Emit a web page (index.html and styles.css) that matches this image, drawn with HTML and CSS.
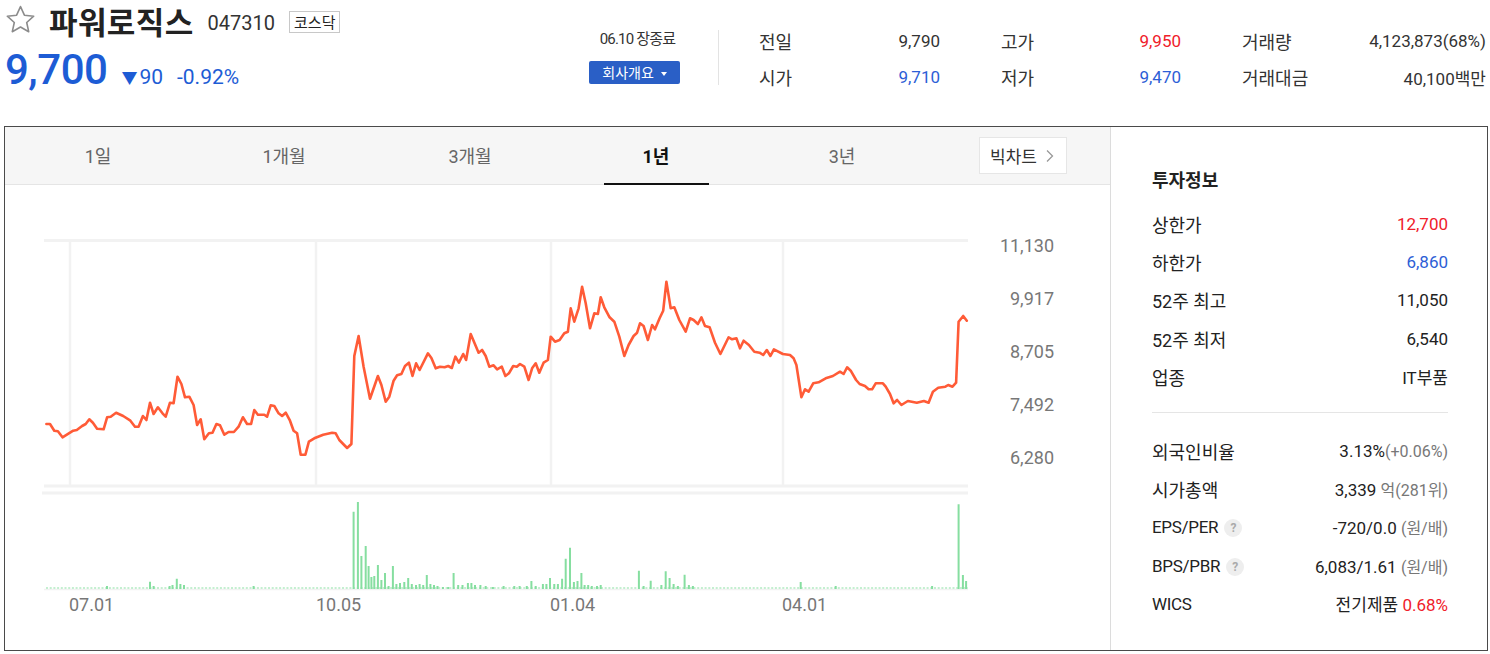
FILE: index.html
```html
<!DOCTYPE html>
<html lang="ko">
<head>
<meta charset="utf-8">
<title>파워로직스</title>
<link rel="stylesheet" href="styles.css">
</head>
<body>
<div class="header">
  <div class="summary">
    <div class="title-row">
      <svg class="star" width="31" height="29" viewBox="0 0 31 29"><path d="M15.5 1.6l3.9 8.6 9.3 1-7 6.3 2 9.2-8.2-4.7-8.2 4.7 2-9.2-7-6.3 9.3-1z" fill="none" stroke="#8c8c8c" stroke-width="1.6" stroke-linejoin="round"/></svg>
      <span class="name">파워로직스</span>
      <span class="code">047310</span>
      <span class="market">코스닥</span>
    </div>
    <div class="price-row">
      <span class="price">9,700</span>
      <span class="diff"><span class="tri">▼</span>90</span>
      <span class="rate">-0.92%</span>
    </div>
  </div>
  <div class="status">
    <div class="date">06.10 장종료</div>
    <div class="company-btn">회사개요 <span class="caret"></span></div>
  </div>
  <div class="vdivider"></div>
  <div class="stats">
    <div class="stat"><span class="lbl">전일</span><span class="val">9,790</span></div>
    <div class="stat"><span class="lbl">고가</span><span class="val up">9,950</span></div>
    <div class="stat"><span class="lbl">거래량</span><span class="val">4,123,873(68%)</span></div>
    <div class="stat"><span class="lbl">시가</span><span class="val down">9,710</span></div>
    <div class="stat"><span class="lbl">저가</span><span class="val down">9,470</span></div>
    <div class="stat"><span class="lbl">거래대금</span><span class="val">40,100백만</span></div>
  </div>
</div>

<div class="box">
  <div class="chart-side">
    <div class="tabs">
      <div class="tab">1일</div>
      <div class="tab">1개월</div>
      <div class="tab">3개월</div>
      <div class="tab active">1년</div>
      <div class="tab">3년</div>
      <div class="big-btn">빅차트<svg width="9" height="14" viewBox="0 0 9 14"><path d="M2 1.5l5.5 5.5L2 12.5" fill="none" stroke="#999" stroke-width="1.3"/></svg></div>
    </div>
    <svg class="chart" width="1105" height="465" viewBox="5 185 1105 465">
      <g stroke="#f2f2f2" fill="none">
        <path d="M44 240.5H968" stroke-width="3"/>
        <path d="M44 486H968" stroke-width="3"/>
        <path d="M42 493H968" stroke-width="3"/>
        <path d="M70 241V487M316 241V487M551 241V487M783 241V487" stroke-width="2.5"/>
        <path d="M44 589.5H968" stroke-width="1.5"/>
      </g>
      <g class="ylabels">
        <text x="1054" y="252">11,130</text>
        <text x="1054" y="305">9,917</text>
        <text x="1054" y="358">8,705</text>
        <text x="1054" y="411">7,492</text>
        <text x="1054" y="464">6,280</text>
      </g>
      <g class="xlabels">
        <text x="69" y="611">07.01</text>
        <text x="316" y="611">10.05</text>
        <text x="550" y="611">01.04</text>
        <text x="782" y="611">04.01</text>
      </g>
      <path d="M46 588H968" stroke="#c4efd0" stroke-width="2" stroke-dasharray="2 1.7" fill="none"/>
      <path fill="none" stroke="#86dea0" stroke-width="2" d="M107 589V586M150 589V581.7M153.6 589V586M169.6 589V586M172.5 589V585M176.8 589V578.7M180.4 589V584M184 589V585M253.6 589V586M353.6 589V511.7M357.9 589V502M361.4 589V556M365.7 589V546M368.6 589V566M371.4 589V577M374.3 589V576M377.9 589V565M381.4 589V580M385 589V573M388.6 589V586M392.9 589V566M396.4 589V584M400 589V583M404.3 589V582M408.2 589V578M411.8 589V584M416 589V585M419.6 589V584M423.2 589V585M426.8 589V575M430.4 589V584M434 589V585M437.5 589V586M442.9 589V587M448.2 589V587M453.6 589V573M458.2 589V585M462.5 589V585M467.9 589V583M471.4 589V583M475 589V585M480.4 589V585M485.7 589V586M492.9 589V587M503.6 589V586M514.3 589V586M519.6 589V586M526.8 589V586M531.4 589V581M535.7 589V586M542.9 589V584M546.4 589V584M550 589V578M554.3 589V584M557.9 589V584M562.1 589V578.7M565.7 589V558.7M570 589V547.7M573.9 589V582M577.5 589V581M581.4 589V573M584.6 589V585M588.2 589V585M591.8 589V586M597 589V586M600.7 589V585M638.9 589V570.7M643.6 589V586M650.7 589V580.7M661.4 589V585M665.7 589V571.3M669.6 589V578M673.6 589V584M677.9 589V586M684.6 589V574.7M688.9 589V585M692.9 589V586M800.7 589V582M835.7 589V586M932.1 589V586M958.6 589V504.3M962.9 589V575M966.1 589V581"/>
      <polyline fill="none" stroke="#ff5b37" stroke-width="2.6" stroke-linejoin="round" stroke-linecap="round" points="46.4,424 50,424 54.3,430.7 57.9,431.3 62.5,437.3 73.2,430.7 76.8,430 82.1,426 85.7,424 89.3,419.3 92.9,422.7 97.1,428.7 103.6,429.3 107.1,417.3 110.7,416.7 116.1,412.7 123.2,416 130.4,420.7 135,426.7 138.6,426.7 142.9,416 146.4,420 150,402.7 153.6,414 157.9,407.3 162.5,413.3 165.7,416.7 170,402.7 173.6,403.3 177.5,376.7 181.4,384 185,397.3 189.3,396.7 193.6,405 197.1,425 200.7,419.3 204.3,439.3 208.9,433.3 212.5,432.7 216.4,424 220,425.3 224.3,434.7 228.6,432 233.9,432 238.6,426.7 242.9,417.3 247.1,424 251.1,424 254.3,410 257.9,414.7 264.3,414.7 267.1,416.7 270.7,405.3 274.3,406 278.6,413.3 282.1,416 285.7,412.7 290,420.7 293.6,430.7 297.1,433.3 300.7,454.7 305.4,454.7 308.9,441.7 314.3,438.3 323.2,434.7 332.1,432.7 335.7,433.3 339.3,440 347.1,448 351.4,444 354.3,356 358.6,336 363.6,366.7 370,398.7 377.9,376 381.4,385 385.7,401.7 389.3,396.7 393.6,380.7 397.1,375.3 401.4,374 405,366 408.9,362.7 412.5,376 416.1,363.3 419.6,370 427.9,353.3 431.4,358 435.7,368.3 440,366.7 444.6,367.3 448.2,366 451.8,368 455.4,356.7 458.9,362.7 463.2,354 466.1,360 470.7,334 478.6,352.7 482.1,350 485.7,356 489.3,366.7 493.6,365.3 497.1,369.3 501.8,366.7 505.4,376 508.9,373.3 513.2,366 516.8,366.7 520,364 524.3,366.7 528.6,380 532.1,368.3 535.7,363.3 539.3,372.7 543.6,362.7 547.9,360 550.7,336.7 555,341.7 559.6,340 564.3,333.3 567.9,331.7 570.7,308.3 574.3,321.7 578.6,308.3 582.1,286.7 585.7,303.3 590,328.3 594.3,313.3 597.9,314 600.7,297.3 604.3,307.3 609.6,317.3 614.3,321.7 619.3,336.7 624.3,356 628.6,345 633.6,336 637.1,332.7 640,323.3 643.6,326 647.9,340 652.1,325 655,329.3 659.6,318.3 663.2,310.7 666.4,281.7 670.7,308.3 674.3,307.3 679.3,320 685.7,331.7 690,318.3 693.6,320 697.9,324 701.4,317.3 705,326 709.6,327.3 715,342.7 720.4,354 728.6,337.3 732.1,339.3 736.4,338.3 740,348.3 743.6,340.7 748.9,345 754.3,351.7 759.6,352.7 763.2,355 766.8,350 770.4,356 773.9,349.3 782.9,354 790,355 793.6,358.3 796.4,365 801.4,397.3 805,389.3 808.6,391.7 813.2,383.3 818.6,382.3 825.7,378.3 832.9,376 840,371.7 843.6,374 847.1,367.3 850.7,370.7 856.1,380 859.6,384 865,386 868.6,389.3 872.1,389.3 875.7,383.3 882.9,383.3 885.7,386.7 890,394 893.6,403.3 897.1,400 901.4,405 907.9,401 916.8,402.7 923.9,401 928.6,402.7 932.9,391.7 938.2,387.7 945.4,386.7 948.2,385 952.5,386.7 956.1,382.7 958.6,321.7 963.2,316 966.8,320.7"/>
    </svg>
  </div>
  <div class="info">
    <div class="info-title">투자정보</div>
    <div class="row"><span>상한가</span><span class="up">12,700</span></div>
    <div class="row"><span>하한가</span><span class="down">6,860</span></div>
    <div class="row"><span>52주 최고</span><span>11,050</span></div>
    <div class="row"><span>52주 최저</span><span>6,540</span></div>
    <div class="row"><span>업종</span><span>IT부품</span></div>
    <div class="sep"></div>
    <div class="row"><span>외국인비율</span><span>3.13%<span class="sub">(+0.06%)</span></span></div>
    <div class="row"><span>시가총액</span><span>3,339 <span class="sub">억(281위)</span></span></div>
    <div class="row"><span class="en">EPS/PER<span class="q">?</span></span><span>-720/0.0 <span class="sub">(원/배)</span></span></div>
    <div class="row"><span class="en">BPS/PBR<span class="q">?</span></span><span>6,083/1.61 <span class="sub">(원/배)</span></span></div>
    <div class="row"><span class="en">WICS</span><span>전기제품 <span class="up">0.68%</span></span></div>
  </div>
</div>
</body>
</html>
```

FILE: styles.css
```css
* { box-sizing: border-box; }
body {
  margin: 0;
  width: 1490px;
  font-family: Roboto, "Noto Sans CJK KR", sans-serif;
  color: #333;
  background: #fff;
}
.header {
  display: flex;
  height: 126px;
}
.summary {
  width: 589px;
  padding-left: 5px;
}
.title-row {
  display: flex;
  align-items: center;
  height: 40px;
}
.star { margin-top: -2px; }
.name {
  margin-left: 13px;
  font-family: "Noto Sans CJK KR", sans-serif;
  font-size: 31px;
  font-weight: 700;
  letter-spacing: 0.4px;
  color: #222;
  line-height: 1;
}
.code {
  margin-left: 14px;
  margin-top: 6px;
  font-size: 20px;
  color: #333;
}
.market {
  margin-left: 14px;
  margin-top: 4px;
  height: 22px;
  padding: 0 4px;
  border: 1px solid #c8c8c8;
  font-family: "Noto Sans CJK KR", sans-serif;
  font-size: 15px;
  line-height: 20px;
  color: #222;
}
.price-row {
  display: flex;
  align-items: baseline;
  margin-top: 6px;
  color: #1d5cd5;
}
.price {
  font-size: 42px;
  font-weight: 500;
  letter-spacing: -0.5px;
  line-height: 48px;
}
.diff {
  margin-left: 14px;
  font-size: 21px;
}
.tri { font-size: 16px; margin-right: 2px; }
.rate {
  margin-left: 14px;
  font-size: 21px;
}
.status {
  width: 91px;
  padding-top: 30px;
  text-align: center;
}
.date {
  font-size: 15px;
  line-height: 18px;
  color: #333;
  letter-spacing: -0.8px;
  padding-left: 6px;
}
.company-btn {
  margin-top: 13px;
  height: 23px;
  background: #2a5fc6;
  border-radius: 2px;
  color: #fff;
  font-size: 14px;
  line-height: 23px;
  font-family: "Noto Sans CJK KR", sans-serif;
}
.caret {
  display: inline-block;
  width: 0; height: 0;
  margin-left: 3px;
  border-left: 3.5px solid transparent;
  border-right: 3.5px solid transparent;
  border-top: 4px solid #fff;
  vertical-align: middle;
}
.vdivider {
  width: 1px;
  height: 55px;
  margin: 30px 0 0 38px;
  background: #e3e3e3;
}
.stats {
  margin-left: 40px;
  padding-top: 23px;
  display: grid;
  grid-template-columns: 181px 180px 244px;
  column-gap: 61px;
  grid-auto-rows: 36px;
  align-content: start;
}
.stat {
  display: flex;
  justify-content: space-between;
  align-items: center;
  font-size: 17px;
}
.lbl { font-size: 18px; }
.up { color: #f0202a; }
.down { color: #2d5ed6; }

.box {
  display: flex;
  margin-left: 4px;
  width: 1484px;
  height: 525px;
  border: 1px solid #4a4a4a;
}
.chart-side {
  width: 1105px;
}
.tabs {
  display: flex;
  height: 58px;
  background: #f6f6f6;
  border-bottom: 1px solid #e5e5e5;
}
.tab {
  position: relative;
  width: 186px;
  text-align: center;
  padding-top: 2px;
  line-height: 55px;
  font-size: 18px;
  color: #666;
}
.tab.active {
  font-weight: 700;
  color: #111;
}
.tab.active::after {
  content: "";
  position: absolute;
  left: 41px;
  bottom: -1px;
  width: 105px;
  height: 2px;
  background: #111;
}
.big-btn {
  display: flex;
  align-items: center;
  gap: 8px;
  margin: 10px 0 0 44px;
  height: 37px;
  width: 88px;
  padding-left: 10px;
  background: #fff;
  border: 1px solid #e6e6e6;
  font-size: 17px;
  color: #333;
}
.chart { display: block; }
.ylabels text {
  font-family: Roboto, sans-serif;
  font-size: 18px;
  fill: #777;
  text-anchor: end;
}
.xlabels text {
  font-family: Roboto, sans-serif;
  font-size: 18px;
  fill: #777;
}
.info {
  width: 377px;
  border-left: 1px solid #dcdcdc;
  padding: 40px 39px 0 41px;
}
.info-title {
  font-size: 18px;
  font-weight: 700;
  line-height: 28px;
  color: #222;
  margin-bottom: 10px;
}
.row {
  display: flex;
  justify-content: space-between;
  align-items: center;
  height: 38.2px;
  font-size: 17px;
  color: #222;
}
.row > span:first-child { font-size: 18px; }
.row > span.en { font-size: 17px; letter-spacing: -0.3px; }
.row .sub { color: #777; font-size: 16px; }
.sep {
  height: 1px;
  background: #e5e5e5;
  margin: 16px 0 19px;
}
.q {
  display: inline-block;
  width: 18px;
  height: 18px;
  margin-left: 6px;
  border-radius: 50%;
  background: #eee;
  color: #aaa;
  font-size: 12px;
  font-weight: 700;
  line-height: 18px;
  text-align: center;
  vertical-align: 1px;
}
```
